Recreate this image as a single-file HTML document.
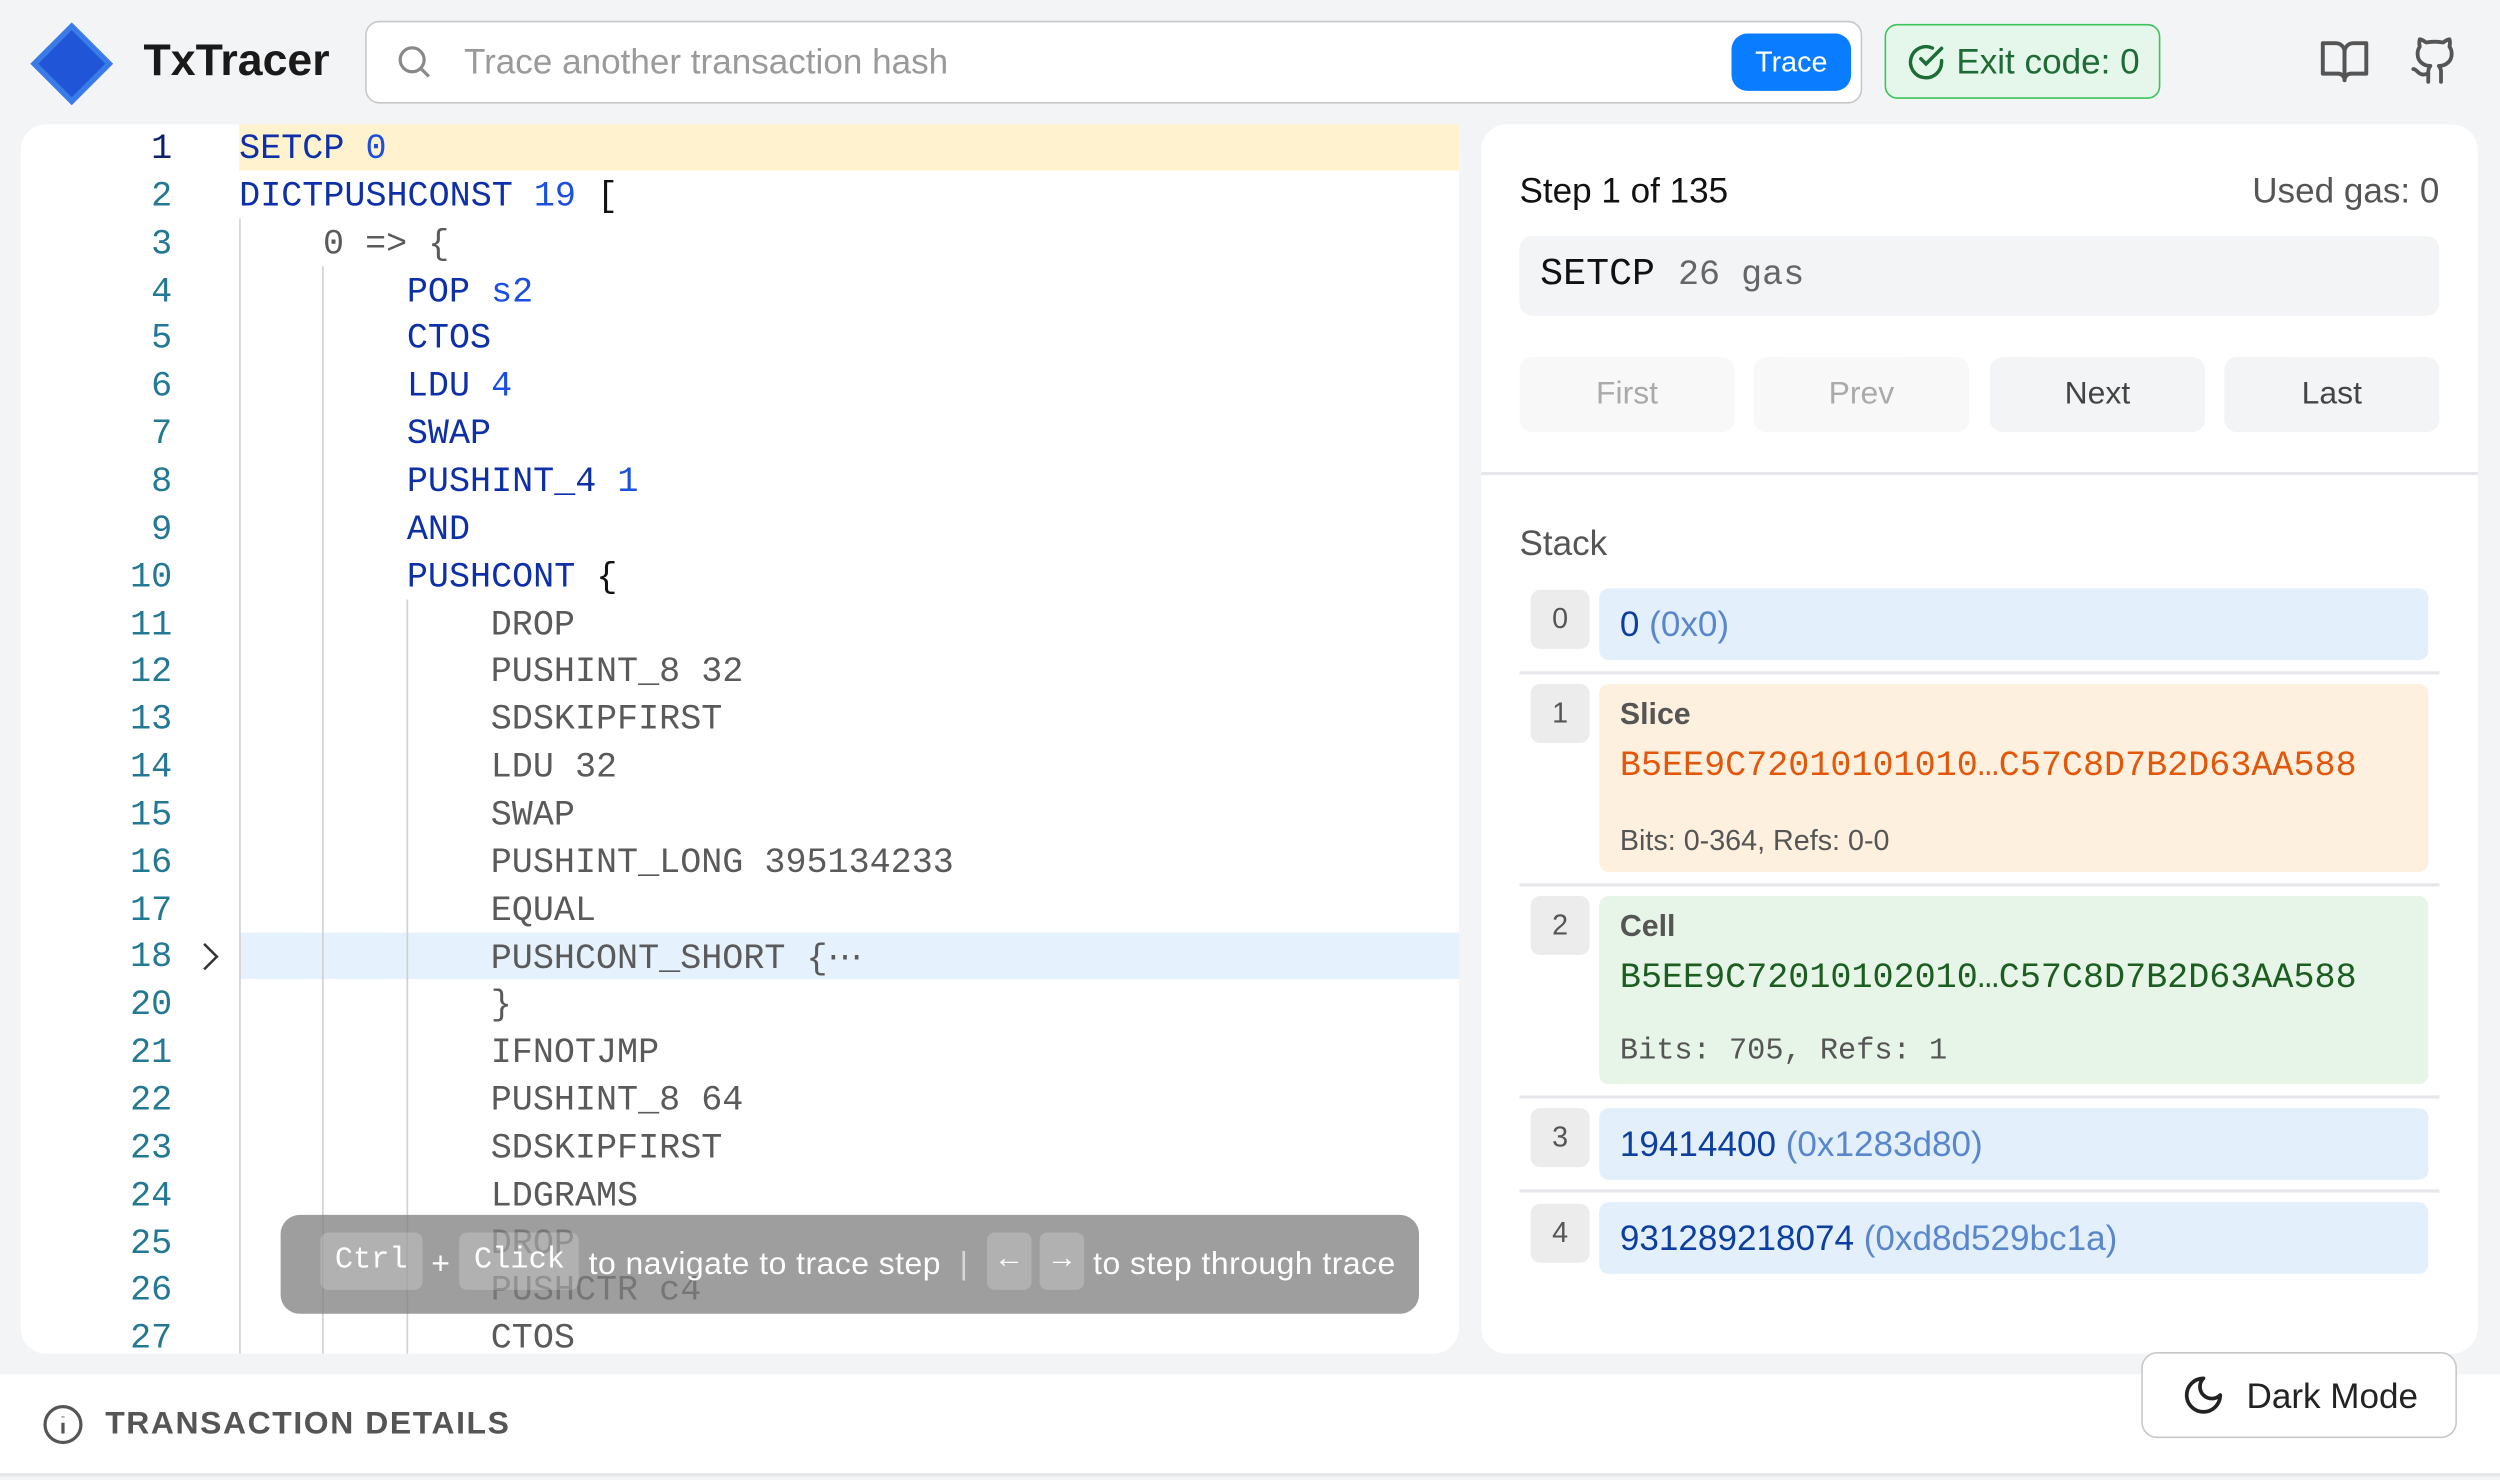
<!DOCTYPE html>
<html><head><meta charset="utf-8"><style>
html,body{margin:0;padding:0;background:#f3f4f6;overflow:hidden;width:2500px;height:1479px}
#root{position:absolute;left:0;top:0;width:1568px;height:928px;transform:scale(1.59439);transform-origin:0 0;font-family:"Liberation Sans",sans-serif}
.abs{position:absolute}
.mono{font-family:"Liberation Mono",monospace}
.ln{position:absolute;left:40px;width:68px;text-align:right;font-size:22px;color:#237893;font-family:"Liberation Mono",monospace}
.cl{position:absolute;font-size:22px;font-family:"Liberation Mono",monospace;white-space:pre;color:#5a5a5a}
.op{color:#0d2fa8}.nm{color:#1a4fe0}.bk{color:#111}
.guide{position:absolute;width:1px;background:#d0d0d0}
.btn{position:absolute;top:224px;width:135px;height:47px;border-radius:8px;text-align:center;line-height:47px;font-size:20px}
.idx{position:absolute;left:960px;width:37px;height:37px;background:#ececec;border-radius:6px;text-align:center;line-height:37px;color:#555;font-size:18px}
.val{position:absolute;left:1003px;width:520px;border-radius:6px}
.sep{position:absolute;left:953px;width:577px;height:2px;background:#e6e7ea}
.kbd{display:inline-block;background:rgba(255,255,255,0.2);border-radius:5px;padding:0 9px;height:36px;line-height:34px;font-family:"Liberation Mono",monospace;font-size:19px;vertical-align:middle;letter-spacing:0}
</style></head><body><div id="root">
<!-- header -->
<svg class="abs" style="left:18px;top:13px" width="54" height="54" viewBox="0 0 54 54"><path d="M27 1 L53 27 L27 53 L1 27 Z" fill="#3b7be8"/><path d="M27 6 L48 27 L27 48 L6 27 Z" fill="#1f55d6"/></svg>
<div class="abs" style="left:90px;top:22px;font-size:28px;font-weight:bold;color:#1a1a1a">TxTracer</div>
<div class="abs" style="left:229px;top:13px;width:937px;height:50px;border:1px solid #c8c8c8;border-radius:9px;background:#fff"></div>
<svg class="abs" style="left:248px;top:27px" width="24" height="24" viewBox="0 0 24 24" fill="none" stroke="#888" stroke-width="2"><circle cx="10.5" cy="10.5" r="7.5"/><path d="M16 16l5 5"/></svg>
<div class="abs" style="left:291px;top:26px;font-size:22px;color:#9a9a9a">Trace another transaction hash</div>
<div class="abs" style="left:1086px;top:21px;width:75px;height:36px;background:#0a7cff;border-radius:10px;color:#fff;font-size:18px;text-align:center;line-height:36px">Trace</div>
<div class="abs" style="left:1182px;top:15px;width:171px;height:45px;border:1.5px solid #3cc35a;border-radius:8px;background:#e5f6ea"></div>
<svg class="abs" style="left:1195px;top:26px" width="26" height="26" viewBox="0 0 24 24" fill="none" stroke="#1d6b35" stroke-width="2" stroke-linecap="round"><path d="M21 11.1V12a9 9 0 1 1-5.3-8.2"/><path d="M21 4L12 13l-3-3"/></svg>
<div class="abs" style="left:1227px;top:26px;font-size:22px;color:#1d6b35">Exit code: 0</div>
<svg class="abs" style="left:1454px;top:23px" width="33" height="30" viewBox="0 0 24 22" fill="none" stroke="#555" stroke-width="1.8" stroke-linejoin="round"><path d="M2 3h6a4 4 0 0 1 4 4v13a3 3 0 0 0-3-3H2z"/><path d="M22 3h-6a4 4 0 0 0-4 4v13a3 3 0 0 1 3-3h7z"/></svg>
<svg class="abs" style="left:1511px;top:22px" width="32" height="32" viewBox="0 0 24 24" fill="none" stroke="#555" stroke-width="1.8" stroke-linecap="round" stroke-linejoin="round"><path d="M15 22v-4a4.8 4.8 0 0 0-1-3.5c3 0 6-2 6-5.5.08-1.250-.27-2.48-1-3.5.28-1.15.28-2.35 0-3.5 0 0-1 0-3 1.5-2.64-.5-5.36-.5-8 0C6 2 5 2 5 2c-.3 1.15-.3 2.35 0 3.5A5.4 5.4 0 0 0 4 9c0 3.5 3 5.5 6 5.5-.39.49-.68 1.05-.85 1.65-.17.6-.22 1.23-.15 1.85v4"/><path d="M9 18c-4.51 2-5-2-7-2"/></svg>

<!-- code panel -->
<div class="abs" style="left:13px;top:78px;width:902px;height:771px;background:#fff;border-radius:16px;overflow:hidden"></div>
<div class="abs" style="left:150px;top:78px;width:765px;height:29px;background:#fff2cf"></div>
<div class="abs" style="left:150px;top:585px;width:765px;height:29px;background:#e5f1fc"></div>
<div class="guide" style="left:150px;top:137px;height:712px"></div>
<div class="guide" style="left:202px;top:167px;height:682px"></div>
<div class="guide" style="left:255px;top:376px;height:473px"></div>
<svg class="abs" style="left:124px;top:589px" width="16" height="22" viewBox="0 0 16 22" fill="none" stroke="#333" stroke-width="1.6"><path d="M4 3l8 8-8 8"/></svg>
<div id="code"></div>
<script>
var L=[["1","<span class='op'>SETCP</span> <span class='nm'>0</span>",0],
["2","<span class='op'>DICTPUSHCONST</span> <span class='nm'>19</span> <span class='bk'>[</span>",0],
["3","0 =&gt; {",1],
["4","<span class='op'>POP</span> <span class='nm'>s2</span>",2],
["5","<span class='op'>CTOS</span>",2],
["6","<span class='op'>LDU</span> <span class='nm'>4</span>",2],
["7","<span class='op'>SWAP</span>",2],
["8","<span class='op'>PUSHINT_4</span> <span class='nm'>1</span>",2],
["9","<span class='op'>AND</span>",2],
["10","<span class='op'>PUSHCONT</span> <span class='bk'>{</span>",2],
["11","DROP",3],["12","PUSHINT_8 32",3],["13","SDSKIPFIRST",3],["14","LDU 32",3],["15","SWAP",3],["16","PUSHINT_LONG 395134233",3],["17","EQUAL",3],["18","PUSHCONT_SHORT {&#8943;",3],["20","}",3],["21","IFNOTJMP",3],["22","PUSHINT_8 64",3],["23","SDSKIPFIRST",3],["24","LDGRAMS",3],["25","DROP",3],["26","PUSHCTR c4",3],["27","CTOS",3]];
var h="";for(var i=0;i<L.length;i++){var y=81+i*29.85;h+="<div class='ln' style='top:"+y+"px;"+(i==0?"color:#0b1f6b":"")+"'>"+L[i][0]+"</div><div class='cl' style='top:"+y+"px;left:"+(150+L[i][2]*52.6)+"px'>"+L[i][1]+"</div>";}
document.getElementById("code").innerHTML=h;
</script>
<div class="abs" style="left:176px;top:762px;width:714px;height:62px;background:rgba(128,128,128,0.76);border-radius:12px;color:#fff;font-size:20px;letter-spacing:0.3px;white-space:nowrap;line-height:62px;padding-left:25px;box-sizing:border-box">
<span class="kbd" style="margin-top:-6px">Ctrl</span> + <span class="kbd" style="margin-top:-6px">Click</span> to navigate to trace step <span style="opacity:.6">&nbsp;|&nbsp;</span> <span class="kbd" style="margin-top:-6px;padding:0 8px">&larr;</span> <span class="kbd" style="margin-top:-6px;padding:0 8px">&rarr;</span> to step through trace</div>

<!-- right panel -->
<div class="abs" style="left:929px;top:78px;width:625px;height:771px;background:#fff;border-radius:16px"></div>
<div class="abs" style="left:953px;top:107px;font-size:22px;color:#111">Step 1 of 135</div>
<div class="abs" style="left:1380px;top:107px;width:150px;text-align:right;font-size:22px;color:#555">Used gas: 0</div>
<div class="abs" style="left:953px;top:148px;width:577px;height:50px;background:#f3f4f6;border-radius:8px"></div>
<div class="abs mono" style="left:966px;top:159px;font-size:24px;color:#111">SETCP <span style="color:#666;font-size:22px">26 gas</span></div>
<div class="btn" style="left:953px;background:#f8f8f9;color:#aaa">First</div>
<div class="btn" style="left:1100px;background:#f8f8f9;color:#aaa">Prev</div>
<div class="btn" style="left:1248px;background:#f3f4f6;color:#444">Next</div>
<div class="btn" style="left:1395px;background:#f3f4f6;color:#444">Last</div>
<div class="abs" style="left:929px;top:296px;width:625px;height:2px;background:#e6e7ea"></div>
<div class="abs" style="left:953px;top:328px;font-size:22px;color:#555">Stack</div>

<div class="idx" style="top:370px">0</div>
<div class="val" style="top:369px;height:45px;background:#e3f0fc"></div>
<div class="abs" style="left:1016px;top:379px;font-size:22px;color:#0d3fa0">0 <span style="color:#5a86cc">(0x0)</span></div>
<div class="sep" style="top:421px"></div>
<div class="idx" style="top:429px">1</div>
<div class="val" style="top:429px;height:118px;background:#fdf0de"></div>
<div class="abs" style="left:1016px;top:438px;font-size:19px;font-weight:bold;color:#555">Slice</div>
<div class="abs mono" style="left:1016px;top:468px;font-size:22px;color:#e2570a">B5EE9C72010101010…C57C8D7B2D63AA588</div>
<div class="abs" style="left:1016px;top:517px;font-size:18px;color:#555">Bits: 0-364, Refs: 0-0</div>
<div class="sep" style="top:554px"></div>
<div class="idx" style="top:562px">2</div>
<div class="val" style="top:562px;height:118px;background:#e7f4e8"></div>
<div class="abs" style="left:1016px;top:571px;font-size:19px;font-weight:bold;color:#555">Cell</div>
<div class="abs mono" style="left:1016px;top:601px;font-size:22px;color:#1b5e20">B5EE9C72010102010…C57C8D7B2D63AA588</div>
<div class="abs mono" style="left:1016px;top:648px;font-size:19px;color:#555">Bits: 705, Refs: 1</div>
<div class="sep" style="top:687px"></div>
<div class="idx" style="top:695px">3</div>
<div class="val" style="top:695px;height:45px;background:#e3f0fc"></div>
<div class="abs" style="left:1016px;top:705px;font-size:22px;color:#0d3fa0">19414400 <span style="color:#5a86cc">(0x1283d80)</span></div>
<div class="sep" style="top:746px"></div>
<div class="idx" style="top:755px">4</div>
<div class="val" style="top:754px;height:45px;background:#e3f0fc"></div>
<div class="abs" style="left:1016px;top:764px;font-size:22px;color:#0d3fa0">931289218074 <span style="color:#5a86cc">(0xd8d529bc1a)</span></div>

<!-- bottom -->
<div class="abs" style="left:0;top:862px;width:1568px;height:62px;background:#fff;border-bottom:2px solid #e4e5e8"></div>
<svg class="abs" style="left:26px;top:880px" width="27" height="27" viewBox="0 0 24 24" fill="none" stroke="#555" stroke-width="1.8"><circle cx="12" cy="12" r="10"/><path d="M12 11v6M12 7.5v.5"/></svg>
<div class="abs" style="left:66px;top:882px;font-size:20px;font-weight:bold;color:#555;letter-spacing:1px">TRANSACTION DETAILS</div>
<div class="abs" style="left:1343px;top:848px;width:198px;height:54px;background:#fff;border:1px solid #c8c8c8;border-radius:10px;box-sizing:border-box"></div>
<svg class="abs" style="left:1368px;top:861px" width="28" height="28" viewBox="0 0 24 24" fill="none" stroke="#222" stroke-width="2" stroke-linecap="round" stroke-linejoin="round"><path d="M12 3a6 6 0 0 0 9 9 9 9 0 1 1-9-9z"/></svg>
<div class="abs" style="left:1409px;top:863px;font-size:22px;color:#222">Dark Mode</div>
</div></body></html>
